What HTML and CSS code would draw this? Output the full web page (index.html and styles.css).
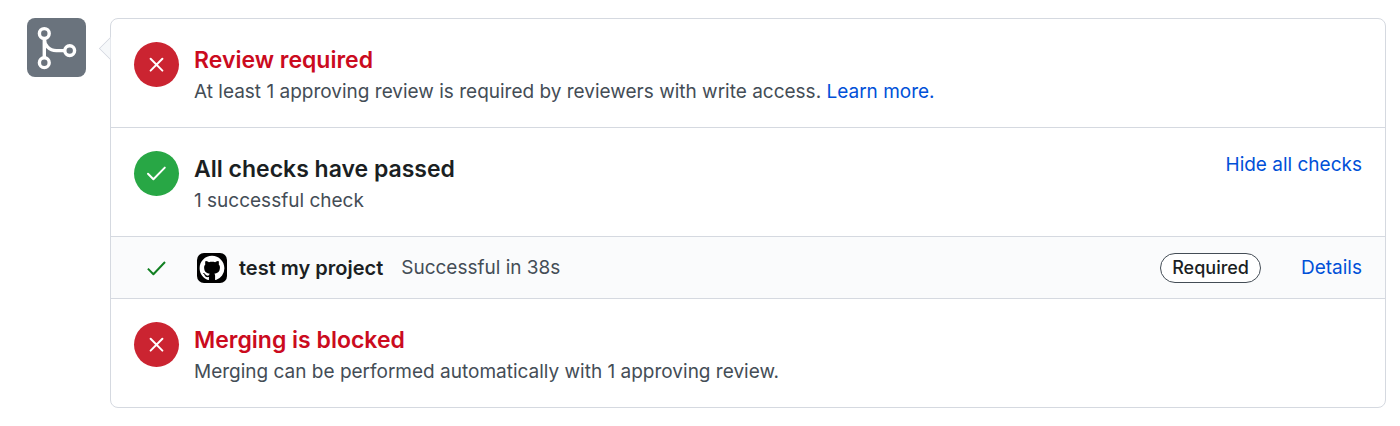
FILE: index.html
```html
<!DOCTYPE html>
<html lang="en">
<head>
<meta charset="utf-8">
<meta name="viewport" content="width=device-width, initial-scale=1">
<title>Merge status</title>
<link rel="stylesheet" href="styles.css">
</head>
<body>
<main class="merge">
  <div class="merge-badge">
    <svg viewBox="0 0 59 59" aria-hidden="true" fill="none" stroke="#fff" stroke-width="3.4">
      <circle cx="17.3" cy="15.5" r="4.9"/>
      <circle cx="17.3" cy="44.7" r="4.9"/>
      <circle cx="42.7" cy="32.6" r="4.9"/>
      <path d="M17.3 20.4V39.8M17.3 20.4C17.3 27.4 22.3 32.6 29.3 32.6H37.8"/>
    </svg>
  </div>
  <section class="box">
    <div class="row">
      <span class="status status-fail">
        <svg viewBox="0 0 45 45" aria-hidden="true"><path d="M16.6 16.8L28.4 28.6M28.4 16.8L16.6 28.6"/></svg>
      </span>
      <div class="text">
        <h2 class="title title-fail">Review required</h2>
        <p class="desc">At least 1 approving review is required by reviewers with write access. <a class="link" href="#">Learn more.</a></p>
      </div>
    </div>
    <div class="row">
      <span class="status status-ok">
        <svg viewBox="0 0 45 45" aria-hidden="true"><path d="M14 22.8L19.4 28.2L30.8 16.6"/></svg>
      </span>
      <div class="text">
        <h2 class="title">All checks have passed</h2>
        <p class="desc">1 successful check</p>
      </div>
      <button class="link toggle" type="button">Hide all checks</button>
    </div>
    <div class="check">
      <svg class="check-mark" viewBox="0 0 45 30" aria-hidden="true"><path d="M13.9 15.6L19.4 21.2L31 9"/></svg>
      <svg class="avatar" viewBox="0 0 30 30" aria-hidden="true">
        <rect width="30" height="30" rx="7" fill="#000"/>
        <path transform="translate(2.6 2.8) scale(1.55)" fill="#fff" d="M8 0C3.58 0 0 3.58 0 8c0 3.54 2.29 6.53 5.47 7.59.4.07.55-.17.55-.38 0-.19-.01-.82-.01-1.49-2.01.37-2.53-.49-2.69-.94-.09-.23-.48-.94-.82-1.13-.28-.15-.68-.52-.01-.53.63-.01 1.08.58 1.23.82.72 1.21 1.87.87 2.33.66.07-.52.28-.87.51-1.07-1.78-.2-3.64-.89-3.64-3.95 0-.87.31-1.59.82-2.15-.08-.2-.36-1.02.08-2.12 0 0 .67-.21 2.2.82.64-.18 1.32-.27 2-.27s1.36.09 2 .27c1.53-1.04 2.2-.82 2.2-.82.44 1.1.16 1.92.08 2.12.51.56.82 1.27.82 2.15 0 3.07-1.87 3.75-3.65 3.95.29.25.54.73.54 1.48 0 1.07-.01 1.93-.01 2.2 0 .21.15.46.55.38A8.01 8.01 0 0016 8c0-4.42-3.58-8-8-8z"/>
      </svg>
      <strong class="name">test my project</strong>
      <span class="result">Successful in 38s</span>
      <span class="label">Required</span>
      <a class="link" href="#">Details</a>
    </div>
    <div class="row">
      <span class="status status-fail">
        <svg viewBox="0 0 45 45" aria-hidden="true"><path d="M16.6 16.8L28.4 28.6M28.4 16.8L16.6 28.6"/></svg>
      </span>
      <div class="text">
        <h2 class="title title-fail">Merging is blocked</h2>
        <p class="desc">Merging can be performed automatically with 1 approving review.</p>
      </div>
    </div>
  </section>
</main>
</body>
</html>
```
FILE: styles.css
```css
* {
  box-sizing: border-box;
}

body {
  margin: 0;
  background: #fff;
  color: #1b1f23;
  font: 400 19px/28px Inter, "Liberation Sans", sans-serif;
}

.merge {
  display: flex;
  align-items: flex-start;
  gap: 24px;
  padding: 18px 14px 18px 27px;
}

.merge-badge {
  flex: none;
  width: 59px;
  height: 59px;
  border-radius: 8px;
  background: #6a737d;
}

.merge-badge svg,
.status svg {
  display: block;
}

.box {
  position: relative;
  flex: 1;
  min-width: 0;
  border: 1px solid #d5d9e0;
  border-radius: 8px;
}

/* Pointer toward the merge badge */
.box::before {
  content: "";
  position: absolute;
  top: 21px;
  left: -9px;
  width: 16px;
  height: 16px;
  border: 1px solid #d5d9e0;
  border-width: 0 0 1px 1px;
  background: #f6f8fa;
  transform: rotate(45deg);
  clip-path: polygon(0 0, 100% 100%, 0 100%);
}

.row {
  display: flex;
  gap: 15px;
  padding: 23px 23px 21px;
}

.row + .row,
.check,
.check + .row {
  border-top: 1px solid #d5d9e0;
}

.status {
  flex: none;
  width: 45px;
  height: 45px;
  border-radius: 50%;
}

.status path,
.check-mark path {
  fill: none;
  stroke: #fff;
  stroke-width: 2;
  stroke-linecap: round;
  stroke-linejoin: round;
}

.status-fail {
  background: #cb2431;
}

.status-ok {
  background: #28a745;
}

.text {
  flex: 1;
  min-width: 0;
}

.title {
  margin: 0;
  font-size: 23px;
  font-weight: 600;
  line-height: 36px;
}

.title-fail {
  color: #cb0b1e;
}

.desc {
  margin: 0;
  color: #444d56;
}

.link {
  color: #0050d8;
  text-decoration: none;
}

.toggle {
  align-self: flex-start;
  padding: 0;
  border: 0;
  background: none;
  font: inherit;
  cursor: pointer;
}

.check {
  display: flex;
  align-items: center;
  padding: 16px 23px 15px;
  background: #fafbfc;
}

.check-mark {
  width: 45px;
  height: 30px;
}

.check-mark path {
  stroke: #118022;
  stroke-linecap: butt;
}

.avatar {
  width: 30px;
  height: 30px;
  margin: 0 12px 0 18px;
}

.name {
  font-size: 20px;
  font-weight: 600;
}

.result {
  margin: 0 auto 0 18px;
  color: #444d56;
}

.label {
  margin-right: 40px;
  padding: 0 11px;
  border: 1px solid #444d56;
  border-radius: 15px;
  background: #fff;
  font-size: 18px;
  font-weight: 500;
}
```
